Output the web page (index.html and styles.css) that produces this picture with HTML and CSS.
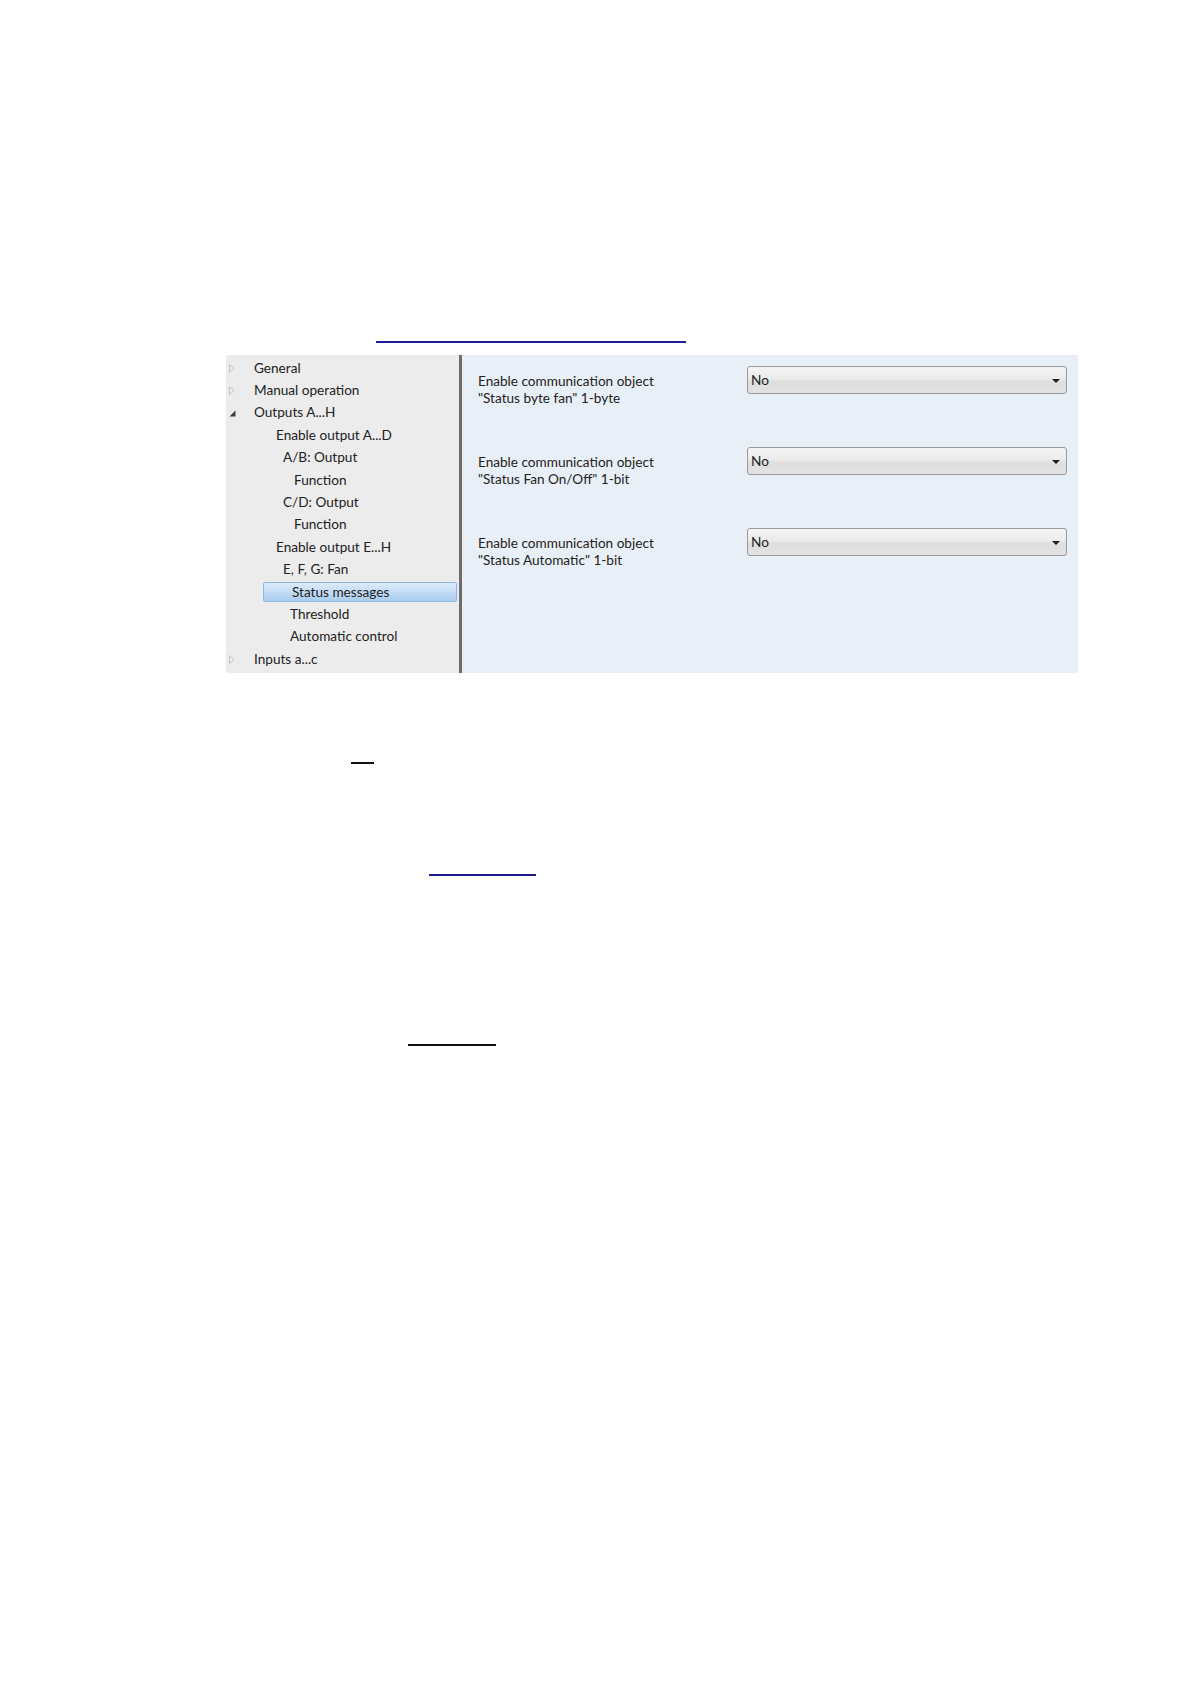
FILE: index.html
```html
<!DOCTYPE html>
<html>
<head>
<meta charset="utf-8">
<link rel="stylesheet" href="styles.css">
</head>
<body>
<div class="page">
  <div class="rule rule-1"></div>

  <div class="panel">
    <div class="tree">
      <div class="row lvl0"><span class="exp closed"><svg width="6" height="9" viewBox="0 0 6 9"><path d="M0.5 0.5 L5 4.5 L0.5 8.5 Z" fill="none" stroke="#c4c4c4" stroke-width="1"/></svg></span><span class="lbl">General</span></div>
      <div class="row lvl0"><span class="exp closed"><svg width="6" height="9" viewBox="0 0 6 9"><path d="M0.5 0.5 L5 4.5 L0.5 8.5 Z" fill="none" stroke="#c4c4c4" stroke-width="1"/></svg></span><span class="lbl">Manual operation</span></div>
      <div class="row lvl0"><span class="exp open"><svg width="7" height="7" viewBox="0 0 7 7"><path d="M6.5 0.5 L6.5 6.5 L0.5 6.5 Z" fill="#3a3a3a"/></svg></span><span class="lbl">Outputs A...H</span></div>
      <div class="row lvl1"><span class="lbl">Enable output A...D</span></div>
      <div class="row lvl2"><span class="lbl">A/B: Output</span></div>
      <div class="row lvl3"><span class="lbl">Function</span></div>
      <div class="row lvl2"><span class="lbl">C/D: Output</span></div>
      <div class="row lvl3"><span class="lbl">Function</span></div>
      <div class="row lvl1"><span class="lbl">Enable output E...H</span></div>
      <div class="row lvl2"><span class="lbl">E, F, G: Fan</span></div>
      <div class="row lvl3b selected"><span class="sel-box"><span class="lbl">Status messages</span></span></div>
      <div class="row lvl3b"><span class="lbl">Threshold</span></div>
      <div class="row lvl3b"><span class="lbl">Automatic control</span></div>
      <div class="row lvl0"><span class="exp closed"><svg width="6" height="9" viewBox="0 0 6 9"><path d="M0.5 0.5 L5 4.5 L0.5 8.5 Z" fill="none" stroke="#c4c4c4" stroke-width="1"/></svg></span><span class="lbl">Inputs a...c</span></div>
    </div>
    <div class="divider"></div>
    <div class="params">
      <div class="param">
        <div class="plabel">Enable communication object<br>"Status byte fan" 1-byte</div>
        <div class="select"><span class="val">No</span><span class="arrow"></span></div>
      </div>
      <div class="param">
        <div class="plabel">Enable communication object<br>"Status Fan On/Off" 1-bit</div>
        <div class="select"><span class="val">No</span><span class="arrow"></span></div>
      </div>
      <div class="param">
        <div class="plabel">Enable communication object<br>"Status Automatic" 1-bit</div>
        <div class="select"><span class="val">No</span><span class="arrow"></span></div>
      </div>
    </div>
  </div>

  <div class="rule rule-2"></div>
  <div class="rule rule-3"></div>
  <div class="rule rule-4"></div>
</div>
</body>
</html>
```

FILE: styles.css
```css
html, body {
  margin: 0;
  padding: 0;
  background: #ffffff;
}

.page {
  display: flow-root;
  width: 1191px;
  height: 1684px;
  overflow: hidden;
  font-family: Lato, "Open Sans", sans-serif;
  color: #222222;
}

.rule {
  height: 2px;
}

.rule-1 {
  margin-top: 341px;
  margin-left: 376px;
  width: 310px;
  background: #1c1c9c;
}

.rule-2 {
  margin-top: 89px;
  margin-left: 351px;
  width: 23px;
  background: #111111;
}

.rule-3 {
  margin-top: 110px;
  margin-left: 429px;
  width: 107px;
  background: #1c1c8c;
}

.rule-4 {
  margin-top: 168px;
  margin-left: 408px;
  width: 88px;
  background: #111111;
}

.panel {
  margin-top: 12px;
  margin-left: 226px;
  width: 852px;
  height: 318px;
  display: flex;
}

.tree {
  width: 233px;
  background: #ececec;
  padding-top: 2px;
  box-sizing: border-box;
}

.row {
  height: 22.4px;
  display: flex;
  align-items: center;
  font-size: 13.6px;
  white-space: nowrap;
}

.row.lvl0 { padding-left: 3px; }
.row.lvl1 { padding-left: 50px; }
.row.lvl2 { padding-left: 57px; }
.row.lvl3 { padding-left: 68px; }
.row.lvl3b { padding-left: 64px; }

.exp {
  width: 25px;
  display: flex;
  align-items: center;
}

.exp.open svg {
  margin-top: 1px;
}

.lbl {
  line-height: 17px;
}

.row.selected {
  padding-left: 37px;
}

.sel-box {
  display: flex;
  align-items: center;
  width: 194px;
  height: 20px;
  box-sizing: border-box;
  padding-left: 28px;
  border: 1px solid #8fb6e0;
  border-radius: 2px;
  background: linear-gradient(to bottom, #dcecfb 0%, #c3dcf5 50%, #a9ccf0 100%);
}

.divider {
  width: 3px;
  background: #6c6c6c;
}

.params {
  flex: 1;
  background: #e9eff6;
  padding-top: 11px;
  padding-left: 16px;
  box-sizing: border-box;
}

.param {
  height: 81.2px;
  display: flex;
  align-items: flex-start;
}

.plabel {
  width: 269px;
  font-size: 13.6px;
  line-height: 17px;
  margin-top: 6.5px;
}

.select {
  width: 320px;
  height: 28px;
  box-sizing: border-box;
  border: 1px solid #9a9a9a;
  border-radius: 3px;
  background: linear-gradient(to bottom, #f4f4f4 0%, #ebebeb 45%, #dedede 55%, #e2e2e2 100%);
  display: flex;
  align-items: center;
  justify-content: space-between;
  padding-left: 3px;
  padding-right: 6px;
  font-size: 13.6px;
}

.arrow {
  width: 0;
  height: 0;
  border-left: 4px solid transparent;
  border-right: 4px solid transparent;
  border-top: 4px solid #1e1e1e;
  margin-top: 2px;
}
```
